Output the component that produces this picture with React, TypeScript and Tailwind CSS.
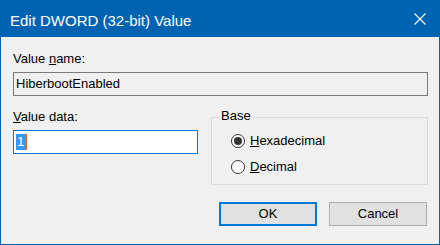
import React from 'react';

const CloseIcon = () => (
  <svg width="12" height="12" viewBox="0 0 12 12" fill="none" stroke="white" strokeWidth="1.1">
    <path d="M0.5 0.5 L11.5 11.5" />
    <path d="M11.5 0.5 L0.5 11.5" />
  </svg>
);

const Radio = ({ checked, children }: { checked?: boolean; children: React.ReactNode }) => (
  <div className="flex items-center h-4">
    <span className="w-[14px] h-[14px] rounded-full border border-[#333333] bg-white flex items-center justify-center">
      {checked && <span className="w-[8px] h-[8px] rounded-full bg-[#333333]"></span>}
    </span>
    <span className="ml-[5px] leading-4">{children}</span>
  </div>
);

export default function App() {
  return (
    <div className="w-[440px] h-[245px] flex flex-col border border-t-0 border-[#0063b1] bg-[#f0f0f0] text-[13px] text-black" style={{ fontFamily: '"Liberation Sans", Arial, sans-serif' }}>
      {/* Title bar */}
      <div className="h-[37px] bg-[#0063b1] flex items-start justify-between pl-[10px] pr-[14px] pt-[12px] shrink-0 -mx-px">
        <span className="text-[15px] leading-[18px] text-white">Edit DWORD (32-bit) Value</span>
        <span className="mt-[1px]"><CloseIcon /></span>
      </div>

      <div className="flex flex-col pl-[12px] pr-[11px]">
        <div className="mt-[14px] leading-4">
          Value <span className="underline">n</span>ame:
        </div>
        <div className="mt-[5px] h-[24px] border border-[#7a7a7a] bg-[#f0f0f0] flex items-center pl-[2px] leading-4">
          HiberbootEnabled
        </div>

        <div className="mt-[13px] flex">
          <div className="w-[185px] flex flex-col">
            <div className="leading-4">
              <span className="underline">V</span>alue data:
            </div>
            <div className="mt-[5px] h-[24px] border border-[#0078d7] bg-white flex items-center pl-[2px]">
              <span className="bg-[#3399ff] text-white leading-4 px-[1px] border-r-2 border-[#d86b1f]">1</span>
            </div>
          </div>

          <div className="relative ml-[13px] mt-[8px] flex-1 h-[68px] border border-[#dcdcdc] pl-[19px] pt-[15px] flex flex-col gap-[10px]">
            <span className="absolute -top-[10px] left-[8px] px-[1px] bg-[#f0f0f0] leading-4">Base</span>
            <Radio checked>
              <span className="underline">H</span>exadecimal
            </Radio>
            <Radio>
              <span className="underline">D</span>ecimal
            </Radio>
          </div>
        </div>

        <div className="mt-[17px] flex justify-end gap-[12px] pr-px">
          <button className="w-[98px] h-[24px] border-2 border-[#0078d7] bg-[#e1e1e1] flex items-center justify-center leading-4">
            OK
          </button>
          <button className="w-[98px] h-[24px] border border-[#adadad] bg-[#e1e1e1] flex items-center justify-center leading-4">
            Cancel
          </button>
        </div>
      </div>
    </div>
  );
}
